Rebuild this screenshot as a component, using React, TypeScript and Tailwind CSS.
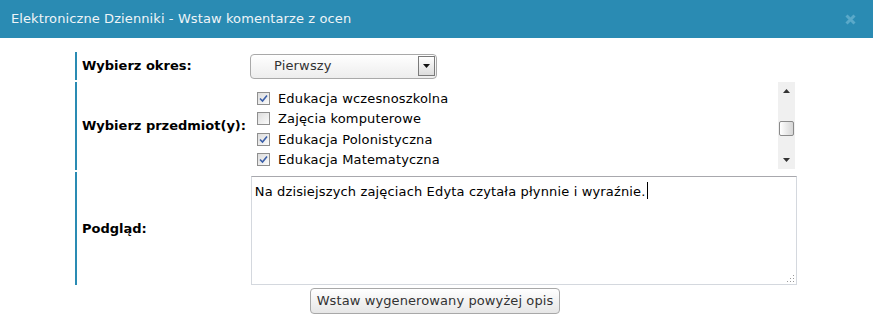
import React from "react";

const font = { fontFamily: '"DejaVu Sans", Verdana, sans-serif' };

function Check({ checked }: { checked: boolean }) {
  return (
    <span className="inline-flex h-[13px] w-[13px] shrink-0 items-center justify-center border border-[#8f8f8f] bg-gradient-to-br from-[#dcdcdc] to-[#fbfbfb]">
      {checked && (
        <svg width="9" height="9" viewBox="0 0 9 9">
          <path d="M1 4.5 L3.5 7 L8 1.5" fill="none" stroke="#3a5ea8" strokeWidth="1.6" />
        </svg>
      )}
    </span>
  );
}

export default function App() {
  const items = [
    { label: "Edukacja wczesnoszkolna", checked: true },
    { label: "Zajęcia komputerowe", checked: false },
    { label: "Edukacja Polonistyczna", checked: true },
    { label: "Edukacja Matematyczna", checked: true },
  ];
  return (
    <div className="h-[323px] w-[873px] overflow-hidden bg-white" style={font}>
      <div className="flex h-[38px] items-center justify-between bg-[#2a8bb3] pl-[11px] pr-[17px]">
        <span className="text-[13px] tracking-[0.1px] text-[#eef4f7]">
          Elektroniczne Dzienniki - Wstaw komentarze z ocen
        </span>
        <svg width="11" height="11" viewBox="0 0 11 11">
          <path d="M1.5 1.5 L9.5 9.5 M9.5 1.5 L1.5 9.5" stroke="#5aa9c9" strokeWidth="3" strokeLinecap="butt" />
        </svg>
      </div>

      <div className="ml-[75px] mt-[14px] flex w-[722px] flex-col gap-[2px]">
        <div className="flex h-[28px] items-center border-l-2 border-[#2a8bb3]">
          <div className="w-[173px] pl-[5px] text-[13px] font-bold text-black">Wybierz okres:</div>
          <div className="flex h-[25px] w-[187px] items-center justify-between rounded-[4px] border border-[#a9a9a9] bg-gradient-to-b from-white to-[#ededed] pl-[23px] pr-[1px]">
            <span className="text-[13px] tracking-[0.15px] text-[#333]">Pierwszy</span>
            <span className="flex h-[20px] w-[17px] items-center justify-center border border-[#7a7a7a] bg-gradient-to-b from-white to-[#dcdcdc]">
              <svg width="7" height="4" viewBox="0 0 7 4">
                <path d="M0 0 H7 L3.5 4 Z" fill="#111" />
              </svg>
            </span>
          </div>
        </div>

        <div className="flex h-[88px] items-center border-l-2 border-[#2a8bb3]">
          <div className="w-[173px] pl-[5px] text-[13px] font-bold text-black">Wybierz przedmiot(y):</div>
          <div className="relative flex h-[88px] flex-1 overflow-hidden">
            <div className="flex flex-1 flex-col pl-[7px] pt-[6px]">
              {items.map((it) => (
                <div key={it.label} className="flex h-[20.5px] items-center gap-[8px]">
                  <Check checked={it.checked} />
                  <span className="text-[13px] tracking-[0.15px] text-black">{it.label}</span>
                </div>
              ))}
            </div>
            <div className="mr-[2px] flex h-[87px] w-[17px] flex-col items-center justify-between bg-[#f0f0f0] py-[7px]">
              <svg width="7" height="4" viewBox="0 0 7 4">
                <path d="M3.5 0 L7 4 H0 Z" fill="#333" />
              </svg>
              <span className="mt-[6px] h-[15px] w-[15px] rounded-[2px] border border-[#8a8a8a] bg-gradient-to-r from-white to-[#d6d6d6]" />
              <svg width="7" height="4" viewBox="0 0 7 4">
                <path d="M0 0 H7 L3.5 4 Z" fill="#333" />
              </svg>
            </div>
          </div>
        </div>

        <div className="flex h-[113px] items-center border-l-2 border-[#2a8bb3]">
          <div className="w-[174px] pl-[5px] text-[13px] font-bold text-black">Podgląd:</div>
          <div className="relative mt-[4px] h-[109px] w-[547px] self-start border border-[#d4d8de] border-t-[#a8a8ad] px-[3px] py-[2px]">
            <span className="text-[13px] tracking-[0.15px] text-black">
              Na dzisiejszych zajęciach Edyta czytała płynnie i wyraźnie.
              <span className="ml-[1px] inline-block h-[17px] w-[1px] translate-y-[3px] bg-black" />
            </span>
            <svg className="absolute bottom-[1px] right-[1px]" width="8" height="8" viewBox="0 0 8 8">
              <g fill="#9a9a9a">
                <rect x="6" y="0" width="1" height="1" />
                <rect x="3" y="3" width="1" height="1" />
                <rect x="6" y="3" width="1" height="1" />
                <rect x="0" y="6" width="1" height="1" />
                <rect x="3" y="6" width="1" height="1" />
                <rect x="6" y="6" width="1" height="1" />
              </g>
            </svg>
          </div>
        </div>
      </div>

      <div className="mt-[3px] flex justify-center pr-[2px]">
        <button className="ml-[-1px] h-[26px] rounded-[4px] border border-[#a8a8a8] bg-gradient-to-b from-white to-[#e6e6e6] px-[6px] text-[13px] tracking-[0.1px] text-[#333]">
          Wstaw wygenerowany powyżej opis
        </button>
      </div>
    </div>
  );
}
